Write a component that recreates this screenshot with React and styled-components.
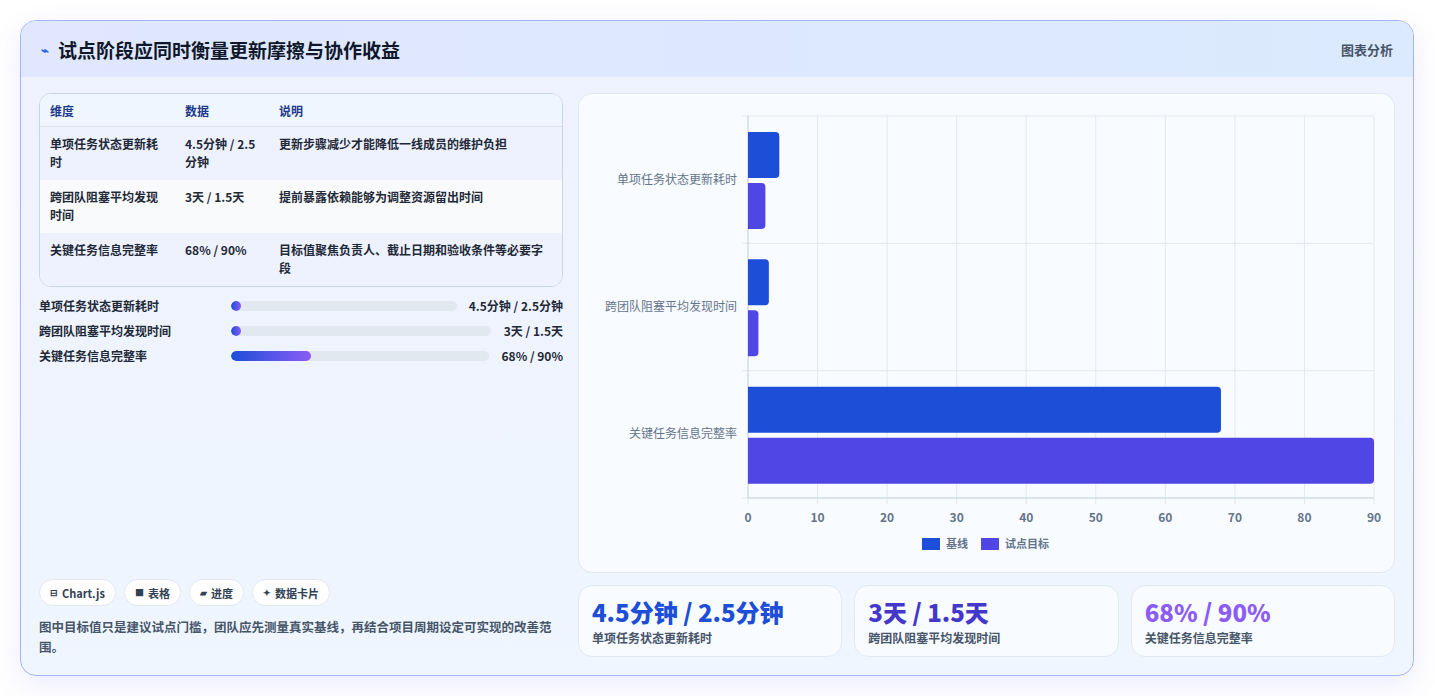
import React from "react";
import styled, { createGlobalStyle } from "styled-components";

const Global = createGlobalStyle`
  html, body { margin: 0; background: #ffffff; }
  body { font-family: "Noto Sans CJK SC", "Noto Sans", sans-serif; color: #0f172a; }
  * { box-sizing: border-box; }
`;

const rows = [
	{ name: "单项任务状态更新耗时", data: "4.5分钟 / 2.5分钟", note: "更新步骤减少才能降低一线成员的维护负担", base: 4.5, target: 2.5, fill: 4 },
	{ name: "跨团队阻塞平均发现时间", data: "3天 / 1.5天", note: "提前暴露依赖能够为调整资源留出时间", base: 3, target: 1.5, fill: 4 },
	{ name: "关键任务信息完整率", data: "68% / 90%", note: "目标值聚焦负责人、截止日期和验收条件等必要字段", base: 68, target: 90, fill: 31 },
];

const tags = [
	["⊟", "Chart.js"],
	["■", "表格"],
	["▰", "进度"],
	["✦", "数据卡片"],
];

const statColors = ["#1d4ed8", "#4338ca", "#8b5cf6"];

function Chart() {
	const left = 169, right = 795, top = 22, bottom = 404;
	const band = (bottom - top) / 3;
	const sx = (v) => left + ((right - left) * v) / 90;
	const ticks = [0, 10, 20, 30, 40, 50, 60, 70, 80, 90];
	return (
		<svg width="815" height="478" viewBox="0 0 815 478">
			{ticks.map((t) => (
				<line key={t} x1={sx(t)} x2={sx(t)} y1={top} y2={bottom + 6} stroke="#e5e7eb" />
			))}
			{[0, 1, 2, 3].map((i) => (
				<line key={i} x1={left - 6} x2={right} y1={top + band * i} y2={top + band * i} stroke="#e5e7eb" />
			))}
			<line x1={left} x2={left} y1={top} y2={bottom} stroke="#cbd5e1" />
			<line x1={left} x2={right} y1={bottom} y2={bottom} stroke="#cbd5e1" />
			{rows.map((r, i) => {
				const y = top + band * i;
				return (
					<g key={r.name}>
						<text x={158} y={y + band / 2 + 4} textAnchor="end" fontSize="12" fill="#64748b">{r.name}</text>
						<path d={bar(left, y + 16, sx(r.base) - left, 46)} fill="#1d4ed8" />
						<path d={bar(left, y + 67, sx(r.target) - left, 46)} fill="#4f46e5" />
					</g>
				);
			})}
			{ticks.map((t) => (
				<text key={t} x={sx(t)} y={428} textAnchor="middle" fontSize="12" fontWeight="700" fill="#64748b">{t}</text>
			))}
			<rect x={343} y={444} width={18} height={12} fill="#1d4ed8" />
			<text x={367} y={454} fontSize="11" fontWeight="700" fill="#64748b">基线</text>
			<rect x={402} y={444} width={18} height={12} fill="#4f46e5" />
			<text x={426} y={454} fontSize="11" fontWeight="700" fill="#64748b">试点目标</text>
		</svg>
	);
}

function bar(x, y, w, h) {
	const r = Math.min(4, w / 2);
	return `M${x} ${y} H${x + w - r} Q${x + w} ${y} ${x + w} ${y + r} V${y + h - r} Q${x + w} ${y + h} ${x + w - r} ${y + h} H${x} Z`;
}

export default function App() {
	return (
		<Page>
			<Global />
			<Card>
				<Header>
					<Title>
						<TitleIcon>⌁</TitleIcon>试点阶段应同时衡量更新摩擦与协作收益
					</Title>
					<HeaderTag>图表分析</HeaderTag>
				</Header>
				<Body>
					<LeftCol>
						<Table>
							<thead>
								<tr>
									<Th style={{ width: 135 }}>维度</Th>
									<Th style={{ width: 94 }}>数据</Th>
									<Th>说明</Th>
								</tr>
							</thead>
							<tbody>
								{rows.map((r, i) => (
									<Tr key={r.name} $alt={i % 2 === 1}>
										<Td>{r.name}</Td>
										<Td>{r.data}</Td>
										<Td>{r.note}</Td>
									</Tr>
								))}
							</tbody>
						</Table>
						<Progress>
							{rows.map((r) => (
								<ProgressRow key={r.name}>
									<ProgressLabel>{r.name}</ProgressLabel>
									<Track>
										<Fill style={{ width: `${r.fill}%` }} />
									</Track>
									<ProgressValue>{r.data}</ProgressValue>
								</ProgressRow>
							))}
						</Progress>
						<Spacer />
						<Tags>
							{tags.map(([icon, label]) => (
								<Tag key={label}>
									<TagIcon>{icon}</TagIcon>
									{label}
								</Tag>
							))}
						</Tags>
						<Note>图中目标值只是建议试点门槛，团队应先测量真实基线，再结合项目周期设定可实现的改善范围。</Note>
					</LeftCol>
					<RightCol>
						<ChartCard>
							<Chart />
						</ChartCard>
						<Stats>
							{rows.map((r, i) => (
								<Stat key={r.name}>
									<StatValue $color={statColors[i]}>{r.data}</StatValue>
									<StatLabel>{r.name}</StatLabel>
								</Stat>
							))}
						</Stats>
					</RightCol>
				</Body>
			</Card>
		</Page>
	);
}

const Page = styled.div`
	width: 1435px;
	height: 696px;
	padding: 20px 21px 20px 20px;
	background: #ffffff;
`;

const Card = styled.div`
	width: 1394px;
	height: 656px;
	border: 1px solid #a5b4fc;
	border-radius: 16px;
	overflow: hidden;
	background: linear-gradient(180deg, #eef2ff 0%, #eff6ff 100%);
	box-shadow: 0 10px 30px rgba(99, 102, 241, 0.12);
	display: flex;
	flex-direction: column;
`;

const Header = styled.div`
	height: 56px;
	flex-shrink: 0;
	padding: 0 20px;
	display: flex;
	align-items: center;
	justify-content: space-between;
	background: linear-gradient(90deg, #e0e7ff 0%, #dbeafe 100%);
`;

const Title = styled.h1`
	margin: 0;
	font-size: 19px;
	font-weight: 700;
	color: #0f172a;
	display: flex;
	align-items: center;
`;

const TitleIcon = styled.span`
	color: #2563eb;
	font-size: 13px;
	margin-right: 9px;
`;

const HeaderTag = styled.span`
	font-size: 13px;
	font-weight: 600;
	color: #475569;
`;

const Body = styled.div`
	flex: 1;
	display: flex;
	gap: 15px;
	padding: 16px 18px 18px 18px;
	min-height: 0;
`;

const LeftCol = styled.div`
	width: 525px;
	display: flex;
	flex-direction: column;
`;

const Table = styled.table`
	width: 100%;
	border-collapse: separate;
	border-spacing: 0;
	border: 1px solid #cbd5e1;
	border-radius: 12px;
	overflow: hidden;
	font-size: 12px;
	background: #ffffff;
`;

const Th = styled.th`
	text-align: left;
	height: 33px;
	padding: 0 10px;
	background: #eff6ff;
	color: #1e3a8a;
	font-weight: 700;
	border-bottom: 1px solid #dbe2ee;
`;

const Tr = styled.tr`
	background: ${(p) => (p.$alt ? "#f8fafc" : "#eef2ff")};
	& + & td {
		border-top: 1px solid #e2e8f0;
	}
`;

const Td = styled.td`
	vertical-align: top;
	padding: 8px 10px 8px 10px;
	height: 53px;
	line-height: 18px;
	color: #1f2937;
	font-weight: 600;
`;

const Progress = styled.div`
	display: flex;
	flex-direction: column;
	gap: 6px;
	margin-top: 9px;
`;

const ProgressRow = styled.div`
	display: flex;
	align-items: center;
	gap: 12px;
	height: 19px;
	font-size: 12px;
	font-weight: 600;
`;

const ProgressLabel = styled.span`
	color: #1f2937;
	white-space: nowrap;
	min-width: 180px;
`;

const Track = styled.div`
	flex: 1;
	height: 10px;
	border-radius: 5px;
	background: #e2e8f0;
	overflow: hidden;
`;

const Fill = styled.div`
	height: 100%;
	min-width: 10px;
	border-radius: 5px;
	background: linear-gradient(90deg, #1d4ed8, #8b5cf6);
`;

const ProgressValue = styled.span`
	font-weight: 700;
	color: #1f2937;
	white-space: nowrap;
	text-align: right;
	min-width: 60px;
`;

const Spacer = styled.div`
	flex: 1;
`;

const Tags = styled.div`
	display: flex;
	gap: 8px;
`;

const Tag = styled.span`
	display: inline-flex;
	align-items: center;
	height: 27px;
	padding: 0 10px;
	border-radius: 14px;
	background: #ffffff;
	border: 1px solid #e2e8f0;
	font-size: 11px;
	font-weight: 700;
	color: #334155;
`;

const TagIcon = styled.span`
	font-size: 9px;
	margin-right: 4px;
`;

const Note = styled.p`
	margin: 11px 0 0;
	font-size: 12.5px;
	line-height: 20px;
	color: #475569;
	font-weight: 600;
`;

const RightCol = styled.div`
	flex: 1;
	display: flex;
	flex-direction: column;
	gap: 12px;
`;

const ChartCard = styled.div`
	height: 480px;
	background: #f8fbff;
	border: 1px solid #e2e8f0;
	border-radius: 14px;
	overflow: hidden;
`;

const Stats = styled.div`
	flex: 1;
	display: grid;
	grid-template-columns: repeat(3, 1fr);
	gap: 12px;
`;

const Stat = styled.div`
	background: #f8fbff;
	border: 1px solid #e2e8f0;
	border-radius: 14px;
	padding: 9px 13px;
`;

const StatValue = styled.div`
	font-size: 24px;
	font-weight: 800;
	line-height: 34px;
	color: ${(p) => p.$color};
`;

const StatLabel = styled.div`
	font-size: 12px;
	color: #475569;
	font-weight: 600;
`;
